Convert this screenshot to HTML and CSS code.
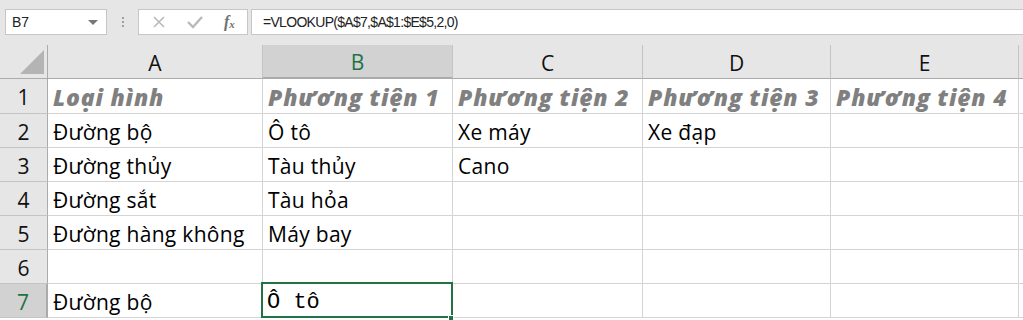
FILE: index.html
```html
<!DOCTYPE html>
<html lang="vi">
<head>
<meta charset="utf-8">
<title>Sheet</title>
<link rel="stylesheet" href="styles.css">
</head>
<body>
<div class="app">
  <div class="formula-bar">
    <div class="namebox"><span class="ref">B7</span><span class="caret"></span></div>
    <div class="grip"><i></i><i></i><i></i></div>
    <div class="fx-buttons">
      <svg class="btn-icon" width="14" height="14" viewBox="0 0 14 14"><path d="M2 2 L12 12 M12 2 L2 12" stroke="#b9b9b9" stroke-width="1.6" fill="none"/></svg>
      <svg class="btn-icon" width="18" height="14" viewBox="0 0 18 14"><path d="M2 7 L7 12 L16 2" stroke="#b9b9b9" stroke-width="2.4" fill="none"/></svg>
      <span class="fx">f<sub>x</sub></span>
    </div>
    <div class="formula">=VLOOKUP($A$7,$A$1:$E$5,2,0)</div>
  </div>
  <div class="sheet">
    <div class="hdr corner"><svg width="26" height="26" viewBox="0 0 26 26"><path d="M25 1 L25 25 L1 25 Z" fill="#b4b4b4"/></svg></div>
    <div class="hdr col">A</div>
    <div class="hdr col active-col">B</div>
    <div class="hdr col">C</div>
    <div class="hdr col">D</div>
    <div class="hdr col">E</div>
    <div class="hdr col last"></div>

    <div class="hdr row">1</div>
    <div class="cell head">Loại hình</div>
    <div class="cell head">Phương tiện 1</div>
    <div class="cell head">Phương tiện 2</div>
    <div class="cell head">Phương tiện 3</div>
    <div class="cell head">Phương tiện 4</div>
    <div class="cell last"></div>

    <div class="hdr row">2</div>
    <div class="cell">Đường bộ</div>
    <div class="cell">Ô tô</div>
    <div class="cell">Xe máy</div>
    <div class="cell">Xe đạp</div>
    <div class="cell"></div>
    <div class="cell last"></div>

    <div class="hdr row">3</div>
    <div class="cell">Đường thủy</div>
    <div class="cell">Tàu thủy</div>
    <div class="cell">Cano</div>
    <div class="cell"></div>
    <div class="cell"></div>
    <div class="cell last"></div>

    <div class="hdr row">4</div>
    <div class="cell">Đường sắt</div>
    <div class="cell">Tàu hỏa</div>
    <div class="cell"></div>
    <div class="cell"></div>
    <div class="cell"></div>
    <div class="cell last"></div>

    <div class="hdr row">5</div>
    <div class="cell">Đường hàng không</div>
    <div class="cell">Máy bay</div>
    <div class="cell"></div>
    <div class="cell"></div>
    <div class="cell"></div>
    <div class="cell last"></div>

    <div class="hdr row">6</div>
    <div class="cell"></div>
    <div class="cell"></div>
    <div class="cell"></div>
    <div class="cell"></div>
    <div class="cell"></div>
    <div class="cell last"></div>

    <div class="hdr row active-row">7</div>
    <div class="cell">Đường bộ</div>
    <div class="cell selected mono">Ô tô<span class="handle"></span></div>
    <div class="cell"></div>
    <div class="cell"></div>
    <div class="cell"></div>
    <div class="cell last"></div>
  </div>
</div>
</body>
</html>
```

FILE: styles.css
```css
* { box-sizing: border-box; }
html, body { margin: 0; padding: 0; }
body {
  width: 1023px;
  height: 320px;
  overflow: hidden;
  background: #ffffff;
  font-family: "Open Sans", "Liberation Sans", sans-serif;
}
.app { display: flex; flex-direction: column; }

.formula-bar {
  height: 45px;
  background: #e6e6e6;
  display: flex;
  align-items: flex-start;
  padding: 9px 0 0 5px;
}
.namebox {
  width: 102px;
  height: 26px;
  background: #fff;
  border: 1px solid #c6c6c6;
  display: flex;
  align-items: center;
  justify-content: space-between;
  padding: 0 8px 0 6px;
  font-family: "Liberation Sans", sans-serif;
  font-size: 14px;
  color: #222;
}
.caret {
  width: 0; height: 0;
  border-left: 5px solid transparent;
  border-right: 5px solid transparent;
  border-top: 5px solid #777;
}
.grip {
  width: 31px;
  height: 26px;
  display: flex;
  flex-direction: column;
  align-items: center;
  justify-content: center;
  gap: 2px;
}
.grip i { display: block; width: 2px; height: 2px; background: #a0a0a0; }
.fx-buttons {
  width: 110px;
  height: 26px;
  background: #fff;
  border: 1px solid #c6c6c6;
  display: flex;
  align-items: center;
  padding: 0 0 0 13px;
  gap: 20px;
}
.btn-icon { display: block; }
.fx {
  font-family: "Liberation Serif", serif;
  font-style: italic;
  font-weight: 700;
  font-size: 16px;
  color: #707070;
  margin-left: 0;
}
.fx sub { font-size: 11px; vertical-align: -1px; }
.formula {
  flex: 1;
  height: 26px;
  margin-left: 3px;
  background: #fff;
  border: 1px solid #c6c6c6;
  border-right: none;
  padding: 0 0 0 11px;
  display: flex;
  align-items: center;
  font-family: "Liberation Sans", sans-serif;
  font-size: 14px;
  letter-spacing: -0.7px;
  color: #222;
}

.sheet {
  display: grid;
  grid-template-columns: 48px 215px 190px 190px 188px 188px 1fr;
  grid-template-rows: 34px 35px repeat(6, 34px);
}
.hdr {
  background: #e6e6e6;
  border-right: 1px solid #c4c4c4;
  border-bottom: 1px solid #c4c4c4;
  color: #111;
  font-size: 20px;
  display: flex;
  align-items: center;
  justify-content: center;
}
.hdr.corner { border-right-color: #ababab; border-bottom-color: #ababab; align-items: flex-end; justify-content: flex-end; padding: 0 2px 3px 0; }
.hdr.col { border-bottom-color: #ababab; padding-top: 2px; font-size: 21px; }
.hdr.row { border-right-color: #ababab; padding: 2px 0 0 0; font-size: 21px; }
.hdr.last { border-right: none; }
.active-col { background: #d2d2d2; color: #217346; border-bottom: 2px solid #217346; }
.active-row { background: #d2d2d2; color: #217346; border-right: 2px solid #217346; }

.cell {
  border-right: 1px solid #d4d4d4;
  border-bottom: 1px solid #d4d4d4;
  font-size: 21px;
  letter-spacing: 0.3px;
  color: #000;
  display: flex;
  align-items: center;
  padding: 3px 0 0 5px;
  white-space: nowrap;
  overflow: visible;
}
.cell.last { border-right: none; }
.cell.head {
  font-size: 23px;
  font-weight: 800;
  font-style: italic;
  letter-spacing: 0.8px;
  color: #808080;
  padding-top: 1px;
}
.cell.selected { position: relative; }
.cell.selected::after {
  content: "";
  position: absolute;
  left: -2px; top: -2px; right: -1px; bottom: -1px;
  border: 2px solid #217346;
}
.mono {
  font-family: "Liberation Mono", "DejaVu Sans Mono", monospace;
  font-size: 22px;
  letter-spacing: 0;
  padding-left: 4px;
}
.handle {
  position: absolute;
  right: -2px;
  bottom: -4px;
  width: 6px;
  height: 6px;
  background: #217346;
  border: 1px solid #fff;
  z-index: 2;
}
```
